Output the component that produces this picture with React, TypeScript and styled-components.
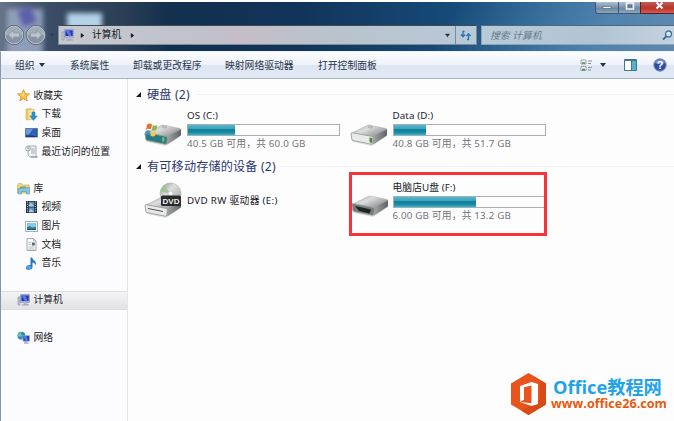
import React from 'react';
import styled, { createGlobalStyle } from 'styled-components';

const Global = createGlobalStyle`
  * { box-sizing: border-box; }
  body { margin: 0; background: #fff; overflow: hidden; }
  svg { display: block; flex: none; overflow: visible; }
`;

const Window = styled.div`
  position: relative;
  width: 674px;
  height: 421px;
  overflow: hidden;
  display: flex;
  flex-direction: column;
  background: #fdfdfe;
  border-top: 2px solid #fff;
  font-family: "Noto Sans", "Noto Sans CJK SC", sans-serif;
  font-size: 9.8px;
  color: #1b1b1f;
  white-space: nowrap;
`;

const TitleBar = styled.header`
  position: relative;
  overflow: hidden;
  height: 49px;
  flex: none;
  display: flex;
  flex-direction: column;
  background:
    linear-gradient(125deg, transparent 65%, rgba(115, 160, 200, 0.5) 88%, rgba(150, 175, 200, 0.4)),
    linear-gradient(90deg, #667487 0, #3b4d66 50px, #2a3e55 125px, #12304e 170px, #12345a 300px, #174a78 450px, #24618f 570px, #3c6e9b 674px);
`;

/* Soft shapes of the desktop icons seen through the glass frame. */
const Glow = styled.div<{ $x: number; $y: number; $w: number; $h: number; $color: string; $tilt?: number }>`
  position: absolute;
  left: ${p => p.$x}px;
  top: ${p => p.$y}px;
  width: ${p => p.$w}px;
  height: ${p => p.$h}px;
  background: ${p => p.$color};
  transform: rotate(${p => p.$tilt ?? 0}deg);
  filter: blur(2.5px);
`;

const CaptionRow = styled.div`
  height: 22px;
  flex: none;
  display: flex;
  justify-content: flex-end;
  align-items: flex-start;
`;

const CaptionButton = styled.div<{ $w: number; $close?: boolean }>`
  width: ${p => p.$w}px;
  height: 12px;
  display: flex;
  justify-content: center;
  align-items: flex-start;
  border: 1px solid ${p => (p.$close ? '#581d29' : '#3e5874')};
  border-top: 0;
  border-right-width: 0;
  border-bottom-left-radius: ${p => (p.$w === 23 ? 3 : 0)}px;
  background: ${p => (p.$close
    ? 'linear-gradient(#bd5f58, #bd3228 55%, #cf6050)'
    : 'linear-gradient(#b0c0d0, #6b88a4 60%, #8ea6bb)')};
`;

const NavRow = styled.div`
  position: relative;
  height: 22px;
  flex: none;
  display: flex;
  align-items: center;
`;

const NavButtons = styled.div`
  width: 58px;
  height: 24px;
  display: flex;
  align-items: center;
  padding-left: 3px;
`;

const AddressBar = styled.div`
  width: 419px;
  height: 20px;
  display: flex;
  align-items: center;
  border: 1px solid #7e8b98;
  border-top-color: #3d4b57;
  background: linear-gradient(90deg, #c6c9cf, #bfc2ca 140px, #c5bec8 180px, #b8c4cc 280px, #b8c9d7);
  padding-left: 2px;
  color: #15181d;
`;

const AddressText = styled.span`
  margin: 0 9px 0 7px;
  line-height: 18px;
`;

const AddressTail = styled.div`
  margin-left: auto;
  height: 18px;
  display: flex;
  align-items: center;
`;

const Refresh = styled.div`
  width: 21px;
  height: 18px;
  margin-left: 5px;
  border-left: 1px solid #718da5;
  display: flex;
  align-items: center;
  justify-content: center;
`;

const SearchBox = styled.div`
  flex: 1;
  height: 20px;
  margin-left: 4px;
  padding: 0 1px 0 8px;
  display: flex;
  align-items: center;
  justify-content: space-between;
  border: 1px solid #8ba4b8;
  border-top-color: #4e6981;
  border-right: 0;
  background: linear-gradient(90deg, #b7cad8, #b2c4d4 60%, #c3d2de);
  color: #697a88;
  font-style: italic;
`;

const Toolbar = styled.nav`
  height: 28px;
  flex: none;
  display: flex;
  align-items: center;
  padding: 0 7px 0 14px;
  border-top: 1px solid #eff4fa;
  border-bottom: 1px solid #a9b4c6;
  border-left: 1px solid #8a98aa;
  background: linear-gradient(#fbfcfe 0%, #eff3fa 48%, #dfe6f3 52%, #e1e9f5 100%);
  color: #27344c;
`;

const Command = styled.div<{ $w: number }>`
  width: ${p => p.$w}px;
  display: flex;
  align-items: center;
  gap: 4px;
`;

const ViewTools = styled.div`
  margin-left: auto;
  display: flex;
  align-items: center;
`;

const Spacer = styled.div<{ $w: number }>`
  width: ${p => p.$w}px;
`;

const Body = styled.div`
  flex: 1;
  display: flex;
  border-left: 1px solid #8795a6;
`;

const Sidebar = styled.aside`
  width: 127px;
  flex: none;
  border-right: 1px solid #e3e6ee;
  background: #fcfcfe;
  padding-top: 7.6px;
`;

const SideItem = styled.div<{ $child?: boolean; $selected?: boolean }>`
  height: 18.6px;
  display: flex;
  align-items: center;
  gap: 4px;
  padding-left: ${p => (p.$child ? 23.5 : 15.5)}px;
  border: solid ${p => (p.$selected ? '#dddde1' : 'transparent')};
  border-width: 1px 0;
  background: ${p => (p.$selected ? 'linear-gradient(#f4f4f6, #e2e2e6)' : 'none')};
  line-height: 16px;
  & > svg { width: 13px; }
`;

const SideGap = styled.div`
  height: 18.6px;
`;

const Content = styled.main`
  flex: 1;
  padding: 7px 0 0 8px;
`;

const Heading = styled.h2`
  height: 17px;
  margin: 0;
  display: flex;
  align-items: center;
  gap: 6px;
  font-size: 12.1px;
  letter-spacing: 0.2px;
  font-weight: 400;
  line-height: 17px;
  color: #2b356e;
  &::after {
    content: '';
    flex: 1;
    height: 1px;
    background: #eff1f6;
  }
`;

const DriveGrid = styled.div<{ $h: number }>`
  height: ${p => p.$h}px;
  display: grid;
  grid-template-columns: 205.5px 205px;
`;

const Drive = styled.div`
  display: flex;
  padding-left: 6.5px;
`;

const DriveIcon = styled.div<{ $top: number; $inset?: number }>`
  width: 44.5px;
  flex: none;
  padding: ${p => p.$top}px 0 0 ${p => p.$inset ?? 1}px;
`;

const DriveInfo = styled.div`
  padding-top: 5px;
`;

const DriveName = styled.div<{ $top?: number; $track?: number }>`
  height: 15px;
  line-height: 15px;
  margin-top: ${p => p.$top ?? 0}px;
  letter-spacing: ${p => p.$track ?? 0.1}px;
`;

const Bar = styled.div<{ $used: number }>`
  width: 153px;
  height: 12px;
  margin-top: 1px;
  border: 1px solid #aaadb2;
  background: linear-gradient(90deg, transparent ${p => p.$used}px, #fdfdfe ${p => p.$used}px),
    linear-gradient(#5ab5cb 0%, #31a3be 40%, #127a95 46%, #1b8ca6 75%, #37b3c9 100%);
`;

const DriveSize = styled.div`
  height: 15px;
  line-height: 15px;
  color: #737579;
  letter-spacing: 0.16px;
`;

const Highlight = styled.div`
  position: absolute;
  left: 349px;
  top: 170px;
  width: 198px;
  height: 64px;
  border: 3px solid #f93239;
`;

const Watermark = styled.div`
  position: absolute;
  left: 510px;
  top: 370px;
  display: flex;
  align-items: center;
  gap: 4px;
  font-family: "Open Sans", "Noto Sans CJK SC", sans-serif;
  font-weight: 700;
`;

const BrandName = styled.div`
  color: #1fa3e8;
  font-size: 18.2px;
  line-height: 20px;
  margin-left: 2px;
`;

const BrandUrl = styled.div`
  color: #e8590f;
  font-size: 12.6px;
  line-height: 14px;
`;

const Triangle = ({ dir, size = 5 }: { dir: 'down' | 'right' | 'open'; size?: number }) => (
  <svg width={size} height={size} viewBox="0 0 6 6">
    <path fill={dir === 'down' ? '#253246' : '#15181d'} d={dir === 'down' ? 'M0 1h6L3 5z' : dir === 'right' ? 'M1 0l4 3-4 3z' : 'M6 0v6H0z'} />
  </svg>
);

const Orb = ({ flip }: { flip?: boolean }) => (
  <svg width="22" height="22" viewBox="0 0 22 22">
    <circle cx="11" cy="11" r="9.500" fill="#8794a4" stroke="#4d5b6d" />
    <path d="M2.500 11a8.500 8.500 0 0 1 17 0z" fill="#a3adb9" />
    <circle cx="11" cy="11" r="8.800" fill="none" stroke="#bac3cd" />
    <g transform={flip ? 'translate(22 0) scale(-1 1)' : undefined}>
      <path d="M5.500 11l5-5v3h6v4h-6v3z" fill="#bcc5cf" stroke="#8792a1" strokeWidth=".7" />
    </g>
  </svg>
);

const Computer = ({ w = 13 }: { w?: number }) => (
  <svg width={w} height={w * 0.92} viewBox="0 0 13 12">
    <path d="M1 3h2v8H1z" fill="#c8ced7" stroke="#8a92a0" strokeWidth=".7" />
    <path d="M3.500 .5h9v8h-9z" fill="#dce3f0" stroke="#8b95b5" strokeWidth=".8" />
    <path d="M4.300 1.300h7.500v6H4.300z" fill="#2335b5" />
    <path d="M4.300 1.300h4l2.500 6H8z" fill="#5977e2" />
    <path d="M7 8.500h3l1 2.500H6z" fill="#b7bdc7" />
    <path d="M5 11h7" stroke="#989da6" />
  </svg>
);

const Star = () => (
  <svg width="13" height="13" viewBox="0 0 13 13">
    <path d="M6.500 .6l1.700 4 4.300.4-3.200 2.800 1 4.200-3.800-2.300L2.800 12l1-4.200L.5 5l4.300-.4z" fill="#f8be42" stroke="#dd932b" strokeWidth=".8" />
    <path d="M6.500 2.500l1 3-1 2-3-1.700 2-.3z" fill="#ffe59a" />
  </svg>
);

const Download = () => (
  <svg width="13" height="13" viewBox="0 0 13 13">
    <path d="M1 1l5-.5V11l-4 1-1-1z" fill="#f0cf6c" stroke="#d3ab45" strokeWidth=".6" />
    <path d="M3 2l6-1v10l-6 1z" fill="#f9e59d" stroke="#d8b75b" strokeWidth=".6" />
    <path d="M7 4h3v4h2.200L8.500 12.500 4.800 8H7z" fill="#2794d2" stroke="#1c74ad" strokeWidth=".5" />
  </svg>
);

const Desktop = () => (
  <svg width="13" height="12" viewBox="0 0 13 12">
    <path d="M.5 1.500h12v8.500H.5z" fill="#345bb3" stroke="#657b9f" />
    <path d="M1 2h7L4 7.500H1z" fill="#6b9ce0" />
    <path d="M1 8.500h11V10H1z" fill="#1a397e" />
    <path d="M6 7.500l2-1.500 4 3v.5z" fill="#2576c4" />
  </svg>
);

const Recent = () => (
  <svg width="13" height="13" viewBox="0 0 13 13">
    <path d="M3 1h8v9.500l1.500 1.500H5L3 10z" fill="#f0f2f4" stroke="#929aa3" strokeWidth=".8" />
    <path d="M6 4h4M6 6h4M6 8h4" stroke="#909aa4" strokeWidth=".8" />
    <circle cx="3" cy="3.500" r="2.400" fill="#e8eff3" stroke="#8b98a2" strokeWidth=".8" />
    <path d="M3 2v1.700h1.200" stroke="#576976" strokeWidth=".6" fill="none" />
    <path d="M6 12h6" stroke="#828b94" />
  </svg>
);

const Library = () => (
  <svg width="13" height="12" viewBox="0 0 13 12">
    <path d="M.5 2l1-1.500h3L5.500 2H12v8H.5z" fill="#f0d778" stroke="#c8aa51" strokeWidth=".6" />
    <path d="M3 3.500h6v5H3z" fill="#69ad72" />
    <path d="M1 5.500l11.500-1V11H9.500V8.500h-5V11H1z" fill="#8bc3df" stroke="#5995b6" strokeWidth=".6" />
  </svg>
);

const Film = () => (
  <svg width="12" height="12" viewBox="0 0 12 12">
    <path d="M.5 0h11v12H.5z" fill="#29323c" />
    <path d="M3.300 .7h5.400v4.800H3.300zM3.300 6.500h5.400v4.800H3.300z" fill="#5695c8" />
    <path d="M3.300 4l2-2 3.400 3v.5H3.300zM3.300 10l2-2 3.400 3v.3H3.300z" fill="#a9cbdc" />
    <path d="M1.900 .5v11M10.100 .5v11" stroke="#c9d0d6" strokeWidth=".9" strokeDasharray="1.200 1" />
  </svg>
);

const Photo = () => (
  <svg width="13" height="11" viewBox="0 0 13 11">
    <path d="M.5 .5h12v10H.5z" fill="#f7f9fb" stroke="#9aa6af" strokeWidth=".9" />
    <path d="M2 2h9v7H2z" fill="#8bc9e8" />
    <path d="M2 6l3-1 2 1.500 4-1V9H2z" fill="#268392" />
    <path d="M2 8h9v1H2z" fill="#214f79" />
  </svg>
);

const Doc = () => (
  <svg width="12" height="13" viewBox="0 0 12 13">
    <path d="M1.500 .5H8l2.500 2.500v9.500h-9z" fill="#f9fafb" stroke="#8f969e" strokeWidth=".8" />
    <path d="M8 .5V3h2.500M3 4.500h3M3 6.500h3M3 9h6M3 11h6" stroke="#9aa1a8" strokeWidth=".7" fill="none" />
    <path d="M6.500 4.500h2.800v3H6.500z" fill="#5e6870" />
  </svg>
);

const Music = () => (
  <svg width="12" height="13" viewBox="0 0 12 13">
    <path d="M5 .5h1.700C7.200 4 12 3.500 10 8.500c-.3-2-1.500-2.700-3-2.900V10c0 3.200-6 3.700-6.500 1.200C.3 8.700 3 7.500 5 8.200z" fill="#2875c8" />
    <ellipse cx="3.500" cy="10.200" rx="2.200" ry="1.500" fill="#51aff0" />
  </svg>
);

const Network = () => (
  <svg width="14" height="13" viewBox="0 0 14 13">
    <circle cx="4.800" cy="4.500" r="4.200" fill="#2989bb" />
    <path d="M1 4c0-2.500 3-3.500 4.500-3L4 3l2 1-2 2-2-.5zM5 7l2-1 1 1-2 1.500z" fill="#71c6a1" />
    <path d="M6.500 4.500h7v6h-7z" fill="#253ab7" stroke="#9dabd5" strokeWidth=".8" />
    <path d="M7 5h3l2 5H9z" fill="#597be2" />
    <path d="M9.500 10.500v1.500M7.500 12.500h5" stroke="#7d8796" />
  </svg>
);

const Disk = ({ kind }: { kind: 'os' | 'data' | 'dvd' | 'usb' }) => (
  <svg width="38" height={kind === 'dvd' ? 36 : 26} viewBox={kind === 'dvd' ? '0 -10 38 36' : '0 0 38 26'}>
    <defs>
      <linearGradient id={`top-${kind}`} x1="0" x2="1" y1="0" y2=".7">
        <stop stopColor="#a1a3a4" /><stop offset=".45" stopColor="#dcdddd" /><stop offset="1" stopColor="#888b8d" />
      </linearGradient>
      <linearGradient id={`side-${kind}`} x1="0" x2="1">
        <stop stopColor="#a7a9aa" /><stop offset="1" stopColor="#5f6365" />
      </linearGradient>
      <linearGradient id={`disc-${kind}`} x1="0" x2="1" y1="0" y2="1">
        <stop stopColor="#8b9190" /><stop offset=".4" stopColor="#dcdfdd" /><stop offset="1" stopColor="#999e9d" />
      </linearGradient>
    </defs>
    <path d="M1 17l18 6.500L37 12v3L22 25 3 21z" fill="#c8caca" opacity=".6" />
    <path d="M1 12.500L17 4.500q1.500-.7 3-.3L36 7.500q1 .3 1 1.300L22 16z" fill={`url(#top-${kind})`} stroke="#a6a8a9" strokeWidth=".5" />
    <path d="M22 15.500L37 8.500v5q0 1-1 1.500L24 23q-2 .5-2-.5z" fill={`url(#side-${kind})`} />
    <path d="M1 12.500q0-1 1.300-.8L22 15.400q1.500.3 1.400 1.600l-.6 5q0 1.500-1.800 1.200L3 19.500q-1-.2-1.200-1.500z" fill={kind === 'os' ? '#287a83' : kind === 'usb' ? '#77797b' : '#e9e9e8'} stroke="#9a9d9e" strokeWidth=".9" />
    {kind === 'usb' && <path d="M4 14l16 3.500-1.500 4L8 19z" fill="#202224" />}
    {kind === 'dvd' && <path d="M4 15.500l15 3" stroke="#505355" strokeWidth="1" />}
    {kind === 'data' && <path d="M19.500 16.500l3 .5-.5 5-2.500-.7z" fill="#4d842d" />}
    {kind === 'os' && (
      <g>
        <path d="M18.500 16l2 .5-.4 4.500-2-.4z" fill="#76c84d" />
        <path d="M3 3.500q3-2 5 0l-1 5q-2.500-1.500-5 .5z" fill="#df7434" />
        <path d="M8.800 4q2 1.500 4.500 0l-1 5q-2 1-4.500 0z" fill="#89b656" />
        <path d="M1.700 10q2.500-1.600 5 0L5.500 14q-2.500-1.600-5 0z" fill="#558dc2" />
        <path d="M7.500 10q2 1.300 4.600.2L11 15q-2.500 1-4.700-.5z" fill="#f4c84c" />
      </g>
    )}
    {kind === 'dvd' && (
      <g>
        <circle cx="26.500" cy=".5" r="10.500" fill={`url(#disc-${kind})`} stroke="#989d9c" strokeWidth=".5" />
        <path d="M26.500 .5L16.500 -1.500q1-4 4-5.500z" fill="#9ec596" />
        <circle cx="26.500" cy=".5" r="2.500" fill="#f5f6f5" stroke="#aaa" strokeWidth=".5" />
        <rect x="17" y="2.500" width="20" height="10.500" rx="1.500" fill="#292b2c" />
        <text x="27" y="11" textAnchor="middle" fontFamily="Liberation Sans" fontSize="8" fontWeight="700" fill="#f1f1f1">DVD</text>
      </g>
    )}
    {(kind === 'data' || kind === 'os') && <ellipse cx="20.500" cy="6" rx="2.200" ry=".9" fill="none" stroke="#96999b" strokeWidth=".7" />}
  </svg>
);

const App = () => (
  <>
    <Global />
    <Window lang="zh-CN">
      <TitleBar>
        <Glow $x={7} $y={7} $w={36} $h={48} $color="rgba(158, 172, 200, 0.8)" />
        <Glow $x={20} $y={6} $w={14} $h={17} $color="rgba(82, 84, 168, 0.85)" $tilt={-20} />
        <Glow $x={67} $y={11} $w={35} $h={16} $color="#b4d3e7" />
        <CaptionRow>
          <CaptionButton $w={23}><svg width="10" height="9" viewBox="0 0 10 9"><path d="M1 4.500h8v2H1z" fill="#f7fafc" stroke="#49586b" strokeWidth=".6" /></svg></CaptionButton>
          <CaptionButton $w={22}><svg width="10" height="9" viewBox="0 0 10 9"><path d="M1.500 1h7v6h-7z" fill="none" stroke="#eff4f8" strokeWidth="1.500" /><path d="M3.500 3h3v2h-3z" fill="none" stroke="#465a71" strokeWidth=".7" /></svg></CaptionButton>
          <CaptionButton $w={34} $close><Spacer $w={3} /><svg width="9" height="9" viewBox="0 0 9 9"><path d="M1.500 .5l6 6M7.500 .5l-6 6" stroke="#fff" strokeWidth="2" /></svg></CaptionButton>
        </CaptionRow>
        <NavRow>
          <NavButtons><Orb /><Orb flip /><Spacer $w={3} /><Triangle dir="down" size={4} /></NavButtons>
          <AddressBar>
            <Computer />
            <Spacer $w={6} />
            <Triangle dir="right" size={5} />
            <AddressText>计算机</AddressText>
            <Triangle dir="right" size={5} />
            <AddressTail>
              <Triangle dir="down" />
              <Refresh>
                <svg width="12" height="11" viewBox="0 0 12 11"><path d="M4.500 1.500H3v4.500M1 4.500l2 2.200 2-2.200M7 9.500h1.500V4.500M6.300 6l2.200-2.200L10.700 6" fill="none" stroke="#2671b0" strokeWidth="1.300" /></svg>
              </Refresh>
            </AddressTail>
          </AddressBar>
          <SearchBox>
            <span>搜索 计算机</span>
            <svg width="11" height="11" viewBox="0 0 11 11"><circle cx="6.500" cy="4" r="3" fill="#d6e5f0" stroke="#4174a1" strokeWidth="1.300" /><path d="M4.300 6.300L1 9.700" stroke="#35658f" strokeWidth="1.800" /></svg>
          </SearchBox>
        </NavRow>
      </TitleBar>
      <Toolbar>
        <Command $w={55}>组织<Triangle dir="down" size={6} /></Command>
        <Command $w={63}>系统属性</Command>
        <Command $w={92}>卸载或更改程序</Command>
        <Command $w={93}>映射网络驱动器</Command>
        <Command $w={70}>打开控制面板</Command>
        <ViewTools>
          <svg width="13" height="13" viewBox="0 0 13 13"><path d="M1 1h5v4H1zM1 7.500h5v4H1z" fill="#f9fbf9" stroke="#84918c" strokeWidth=".8" /><path d="M2 4h3M2 10.500h3" stroke="#4e8560" strokeWidth="1.300" /><path d="M8 2h4M8 4.500h3M8 8.500h4M8 11h3" stroke="#6b7c94" strokeWidth=".8" /></svg>
          <Spacer $w={7} /><Triangle dir="down" size={6} /><Spacer $w={18} />
          <svg width="13" height="12" viewBox="0 0 13 12"><path d="M.5 .5h12v11H.5z" fill="#fff" stroke="#44768b" /><path d="M8 2h4v9H8z" fill="#55b1c9" /><path d="M1 1.500h11M7.500 2v9.500" stroke="#397b95" /></svg>
          <Spacer $w={16} />
          <svg width="14" height="14" viewBox="0 0 14 14"><circle cx="7" cy="7" r="6.200" fill="#2d4ca2" stroke="#7e91c2" /><path d="M2 5a5.300 5.300 0 0 1 10 0q-5 2-10 0z" fill="#718fd0" /><text x="7" y="11" textAnchor="middle" fontFamily="Liberation Sans" fontWeight="700" fontSize="11" fill="#fff">?</text></svg>
        </ViewTools>
      </Toolbar>
      <Body>
        <Sidebar>
          <SideItem><Star />收藏夹</SideItem>
          <SideItem $child><Download />下载</SideItem>
          <SideItem $child><Desktop />桌面</SideItem>
          <SideItem $child><Recent />最近访问的位置</SideItem>
          <SideGap />
          <SideItem><Library />库</SideItem>
          <SideItem $child><Film />视频</SideItem>
          <SideItem $child><Photo />图片</SideItem>
          <SideItem $child><Doc />文档</SideItem>
          <SideItem $child><Music />音乐</SideItem>
          <SideGap />
          <SideItem $selected><Computer />计算机</SideItem>
          <SideGap />
          <SideItem><Network />网络</SideItem>
        </Sidebar>
        <Content>
          <Heading><Triangle dir="open" />硬盘 (2)</Heading>
          <DriveGrid $h={54.5}>
            <Drive>
              <DriveIcon $top={18}><Disk kind="os" /></DriveIcon>
              <DriveInfo><DriveName>OS (C:)</DriveName><Bar $used={47} /><DriveSize>40.5 GB 可用，共 60.0 GB</DriveSize></DriveInfo>
            </Drive>
            <Drive>
              <DriveIcon $top={18} $inset={2}><Disk kind="data" /></DriveIcon>
              <DriveInfo><DriveName>Data (D:)</DriveName><Bar $used={32} /><DriveSize>40.8 GB 可用，共 51.7 GB</DriveSize></DriveInfo>
            </Drive>
          </DriveGrid>
          <Heading><Triangle dir="open" />有可移动存储的设备 (2)</Heading>
          <DriveGrid $h={60}>
            <Drive>
              <DriveIcon $top={8.5}><Disk kind="dvd" /></DriveIcon>
              <DriveInfo><DriveName $top={13} $track={0.3}>DVD RW 驱动器 (E:)</DriveName></DriveInfo>
            </Drive>
            <Drive>
              <DriveIcon $top={17.5} $inset={2.5}><Disk kind="usb" /></DriveIcon>
              <DriveInfo><DriveName $track={0.05}>电脑店U盘 (F:)</DriveName><Bar $used={82} /><DriveSize>6.00 GB 可用，共 13.2 GB</DriveSize></DriveInfo>
            </Drive>
          </DriveGrid>
        </Content>
      </Body>
      <Highlight />
      <Watermark>
        <svg width="37" height="44" viewBox="0 0 37 44">
          <path d="M18.500 1L36 11.500v21L18.500 43 1 32.500v-21z" fill="#e9541d" />
          <path d="M18.500 1L36 11.500v21L18.500 43l-7-4.200L30 28V9z" fill="#d94a16" />
          <path d="M10 14l11.500-4L28 12v20l-6.500 2L10 30l11.500 1.300V13.500L14 15.300v12.500L10 30z" fill="#fff" />
        </svg>
        <div>
          <BrandName>Office教程网</BrandName>
          <BrandUrl>www.office26.com</BrandUrl>
        </div>
      </Watermark>
    </Window>
  </>
);

export default App;
